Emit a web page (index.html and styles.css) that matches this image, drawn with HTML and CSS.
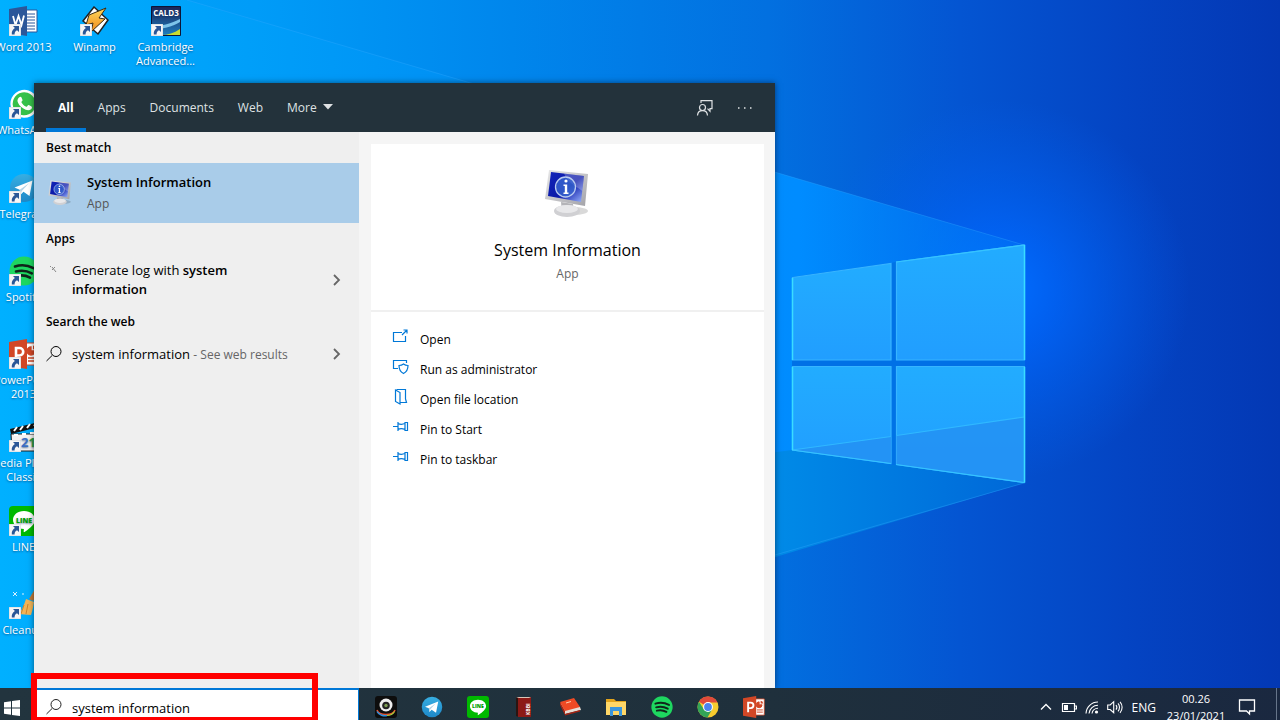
FILE: index.html
```html
<!DOCTYPE html>
<html lang="en">
<head>
    <meta charset="UTF-8">
    <meta name="viewport" content="width=device-width, initial-scale=1.0">
    <title>Search - System Information</title>
    <link rel="stylesheet" href="styles.css">
</head>
<body>
    <!-- Shared icons -->
    <svg class="sprite" aria-hidden="true">
        <defs>
            <linearGradient id="screenFill" x1="0" y1="0" x2="1" y2="1">
                <stop offset="0" stop-color="#1426b8"/>
                <stop offset=".55" stop-color="#0a18a8"/>
                <stop offset="1" stop-color="#9db8ff"/>
            </linearGradient>
            <linearGradient id="frameFill" x1="0" y1="0" x2="1" y2="1">
                <stop offset="0" stop-color="#e9e9e9"/>
                <stop offset="1" stop-color="#a2a2a8"/>
            </linearGradient>
            <linearGradient id="telegramFill" x1="0" y1="0" x2="0" y2="1">
                <stop offset="0" stop-color="#37aee2"/>
                <stop offset="1" stop-color="#1e88c8"/>
            </linearGradient>
            <linearGradient id="boltFill" x1="0" y1="0" x2="0" y2="1">
                <stop offset="0" stop-color="#ffd75a"/>
                <stop offset="1" stop-color="#f08a1c"/>
            </linearGradient>
            <linearGradient id="caldFill" x1="0" y1="0" x2="0" y2="1">
                <stop offset="0" stop-color="#1b2356"/>
                <stop offset="1" stop-color="#1d7fc0"/>
            </linearGradient>
        </defs>
        <symbol id="arrow" viewBox="0 0 12 12">
            <path d="M0 0h12v12H0z" fill="#f6f6f6" stroke="#b9c4cc" stroke-width=".6"/>
            <path d="M4 2h6v6L8 6.2C6.200 7.200 5.500 8.500 5.600 10.500H2.800C2.500 7.500 3.600 5.600 5.900 4.100z" fill="#2b5797"/>
        </symbol>
        <symbol id="search" viewBox="0 0 18 18">
            <circle cx="11" cy="6.500" r="5" fill="none" stroke="currentColor"/>
            <path d="M7.300 10.300L1.500 16" fill="none" stroke="currentColor"/>
        </symbol>
        <symbol id="chevron" viewBox="0 0 10 14">
            <path d="M2 2l5 5-5 5" fill="none" stroke="#666" stroke-width="1.800"/>
        </symbol>
        <symbol id="pin" viewBox="0 0 18 14">
            <path d="M1 6.500h5M6 2v9M6 3.500c2 1 4.500 1 7 0M6 9.500c2-1 4.500-1 7 0M13 2.500h2.500v8H13z" fill="none" stroke="currentColor" stroke-width="1.200"/>
        </symbol>
        <symbol id="monitor" viewBox="0 0 48 52">
            <ellipse cx="30" cy="43" rx="14" ry="4" fill="#000" opacity=".15"/>
            <path d="M17 34l12 2 1 8H18z" fill="#b4b4b8"/>
            <ellipse cx="23" cy="43" rx="13" ry="6" fill="#d0d0d3"/>
            <ellipse cx="23" cy="41" rx="11" ry="4" fill="#e8e8ea"/>
            <path d="M5 2l39 4-3 32L1 31z" fill="url(#frameFill)"/>
            <path d="M7 4l33 4-3 26-33-6z" fill="url(#screenFill)"/>
            <path d="M20 5.600L40 8l-1.700 15C30 17 24 15 20 5.600z" fill="#fff" opacity=".25"/>
            <circle cx="21.500" cy="19" r="10" fill="#3b6bd2" fill-opacity=".75" stroke="#b9cbf0" stroke-width="1.300"/>
            <circle cx="22" cy="13" r="1.600" fill="#fff"/>
            <path d="M19.500 16.500h3.700v8h1.300v1.500h-5v-1.500h1.300V18h-1.300z" fill="#fff"/>
        </symbol>
        <symbol id="whatsapp" viewBox="0 0 30 30">
            <path d="M1 29l2.200-7.300A14 14 0 1 1 8.500 27z" fill="#fff"/>
            <path d="M4 26l1.500-5A11.500 11.500 0 1 1 9 24.500z" fill="#36c14a"/>
            <path d="M10 8.500c1-1 2-1 2.500 0l1 2.500c.3 1-1.500 1.500-1 2.500 1.200 2 2.500 3.200 4.800 4.200 1 .4 1.500-2 2.500-1.600l2.700 1.300c.8.500.5 2-.5 2.900-2 1.700-5 1-8-1-3-2-5-4.500-5.500-7-.2-1.500.5-3 1.500-3.800z" fill="#fff"/>
        </symbol>
        <symbol id="telegram" viewBox="0 0 30 30">
            <circle cx="15" cy="15" r="14" fill="url(#telegramFill)"/>
            <path d="M5.500 14.500L23.500 7.500 20.500 23l-6-4.300-3 3-.8-5z" fill="#fff"/>
            <path d="M10.700 16.700L20 10.200l-7.200 7.700-1.300 3.800z" fill="#b5d3e6"/>
        </symbol>
        <symbol id="spotify" viewBox="0 0 30 30">
            <circle cx="15" cy="15" r="14.500" fill="#1ed760"/>
            <path d="M6 10.500c6-2 13-1.300 18.500 1.700M7 15.500c5.500-1.500 11-.8 15.800 1.800M8 20c4.500-1.200 9-.6 13 1.600" fill="none" stroke="#10251a" stroke-width="2.600" stroke-linecap="round"/>
        </symbol>
        <symbol id="powerpoint" viewBox="0 0 30 30">
            <path d="M16 4h13v22H16z" fill="#fff" stroke="#d24726"/>
            <path d="M22 8a4 4 0 1 0 4 4h-4zM19 19h8M19 22h8" fill="#d24726" stroke="#d24726" stroke-width="1.300"/>
            <path d="M24 6.500a4 4 0 0 1 3.500 3.700H24z" fill="#d24726"/>
            <path d="M0 3l18-3v30L0 27z" fill="#d24726"/>
            <path d="M7 22V9h3.500a3.500 3.500 0 0 1 0 7.500H7" fill="none" stroke="#fff" stroke-width="2.600"/>
        </symbol>
        <symbol id="line" viewBox="0 0 30 30">
            <rect width="30" height="30" rx="4" fill="#00b900"/>
            <path d="M15 5c6.500 0 11 4 11 8.800 0 4.200-4 8-10.500 12.200-.8.400-1 0-.8-1l.2-2C8.500 23 4 18.500 4 13.800 4 9 8.500 5 15 5z" fill="#fff"/>
            <text x="15" y="16.500" text-anchor="middle" font-family="Open Sans, sans-serif" font-weight="800" font-size="7" fill="#00a000">LINE</text>
        </symbol>
    </svg>

    <main class="desktop">
        <svg class="wallpaper" viewBox="0 0 1280 720" preserveAspectRatio="xMidYMid slice" aria-hidden="true">
            <defs>
                <linearGradient id="sky" x1="0" y1="0" x2="1" y2="0">
                    <stop offset="0" stop-color="#00a4fb"/>
                    <stop offset=".2" stop-color="#009cf8"/>
                    <stop offset=".4" stop-color="#0086ec"/>
                    <stop offset=".6" stop-color="#0270e0"/>
                    <stop offset=".75" stop-color="#0455d2"/>
                    <stop offset=".88" stop-color="#0444c3"/>
                    <stop offset="1" stop-color="#0338b4"/>
                </linearGradient>
                <radialGradient id="glow" gradientUnits="userSpaceOnUse" cx="1000" cy="290" r="190">
                    <stop offset="0" stop-color="#006eff"/>
                    <stop offset=".3" stop-color="#0068ff" stop-opacity=".7"/>
                    <stop offset="1" stop-color="#0060f0" stop-opacity="0"/>
                </radialGradient>
                <linearGradient id="beam" gradientUnits="userSpaceOnUse" x1="0" y1="0" x2="1024" y2="0">
                    <stop offset="0" stop-color="#00b0ff"/>
                    <stop offset=".2" stop-color="#00a2fa"/>
                    <stop offset=".45" stop-color="#0090f4"/>
                    <stop offset=".78" stop-color="#008cff"/>
                    <stop offset="1" stop-color="#0080f8" stop-opacity=".3"/>
                </linearGradient>
                <linearGradient id="lower" gradientUnits="userSpaceOnUse" x1="500" y1="0" x2="1024" y2="0">
                    <stop offset="0" stop-color="#0090e8" stop-opacity="0"/>
                    <stop offset=".5" stop-color="#008ce8"/>
                    <stop offset="1" stop-color="#0068d8"/>
                </linearGradient>
                <linearGradient id="pane" x1="0" y1="0" x2="0" y2="1">
                    <stop offset="0" stop-color="#22acff"/>
                    <stop offset="1" stop-color="#219eff"/>
                </linearGradient>
            </defs>
            <rect width="1280" height="720" fill="url(#sky)"/>
            <rect width="1280" height="720" fill="url(#glow)"/>
            <path d="M1024 245L187 0H0v720h210L1024 483z" fill="url(#beam)"/>
            <path d="M792 450L500 490v149L1024 483z" fill="url(#lower)"/>
            <path d="M187 0L1024 245M1024 483L775 555" fill="none" stroke="#35a8ff" stroke-opacity=".35"/>
            <path d="M792 277l99-14v202l-99-15zM896 262l129-17v238l-129-18z" fill="#0078ea"/>
            <path d="M891 263v202h5V262z" fill="#0073e6"/>
            <path d="M792 360h233v6H792z" fill="#0070e6"/>
            <g fill="url(#pane)" stroke="#37b4ff" stroke-width="1.200">
                <path d="M792.500 277.500l98.500-14V360h-98.500z"/>
                <path d="M896.500 262l128-17v115h-128z"/>
                <path d="M792.500 366.500H891V463.500l-98.500-13.500z"/>
                <path d="M896.500 366.500h128V482.500l-128-18z"/>
            </g>
            <path d="M792 450l99-13.500v27zM896.500 435.500l128-18.500v65.500l-128-18z" fill="#2490f2" opacity=".8"/>
            <path d="M792 450l99-13.500M896.500 435.500l128-18.500" fill="none" stroke="#30b8ff" stroke-width="1.200"/>
            <path d="M896 464.500l128 18M896 262l128-17M792 450l99 13.500" fill="none" stroke="#35c4ff" stroke-width="1.200"/>
            <path d="M792.500 278v82M792.500 367v83M1024.500 245v115M1024.500 367v115.500" fill="none" stroke="#3adcff" stroke-width="1.500"/>
        </svg>

        <nav class="shortcuts" aria-label="Desktop">
            <div class="shortcut-column">
                <a class="shortcut" href="#">
                    <svg class="shortcut-icon" viewBox="0 0 30 30">
                        <path d="M15 4h13v22H15z" fill="#fff" stroke="#2b579a"/>
                        <path d="M18 8h8M18 11h8M18 14h8M18 17h8M18 20h8M18 23h8" stroke="#2b579a"/>
                        <path d="M0 3l18-3v30L0 27z" fill="#2b579a"/>
                        <path d="M4 10l2.500 9 3-9 3 9L15 9.500" fill="none" stroke="#fff" stroke-width="1.800"/>
                        <use href="#arrow" y="18" width="12" height="12"/>
                    </svg>
                    <span>Word 2013</span>
                </a>
                <a class="shortcut" href="#">
                    <svg class="shortcut-icon" viewBox="0 0 30 30">
                        <use href="#whatsapp"/>
                        <use href="#arrow" y="18" width="12" height="12"/>
                    </svg>
                    <span>WhatsApp</span>
                </a>
                <a class="shortcut" href="#">
                    <svg class="shortcut-icon" viewBox="0 0 30 30">
                        <use href="#telegram"/>
                        <use href="#arrow" y="18" width="12" height="12"/>
                    </svg>
                    <span>Telegram</span>
                </a>
                <a class="shortcut" href="#">
                    <svg class="shortcut-icon" viewBox="0 0 30 30">
                        <use href="#spotify"/>
                        <use href="#arrow" y="18" width="12" height="12"/>
                    </svg>
                    <span>Spotify</span>
                </a>
                <a class="shortcut" href="#">
                    <svg class="shortcut-icon" viewBox="0 0 30 30">
                        <use href="#powerpoint"/>
                        <use href="#arrow" y="18" width="12" height="12"/>
                    </svg>
                    <span>PowerPoint 2013</span>
                </a>
                <a class="shortcut" href="#">
                    <svg class="shortcut-icon" viewBox="0 0 30 30">
                        <path d="M2 12h28v17H3z" fill="#f4f4f4" stroke="#222"/>
                        <path d="M1 7L30 0v5L2 12z" fill="#111"/>
                        <path d="M5 9l3-4M11 8l3-4M18 6l3-4M25 4l3-4M5 13h4M13 12h4M21 11h5" stroke="#fff" stroke-width="2"/>
                        <text x="12" y="25" font-family="Open Sans, sans-serif" font-weight="700" font-size="13" fill="#3b6fc4">2<tspan fill="#2f9a3c">1</tspan></text>
                        <use href="#arrow" y="18" width="12" height="12"/>
                    </svg>
                    <span>Media Player Classic</span>
                </a>
                <a class="shortcut" href="#">
                    <svg class="shortcut-icon" viewBox="0 0 30 30">
                        <use href="#line"/>
                        <use href="#arrow" y="18" width="12" height="12"/>
                    </svg>
                    <span>LINE</span>
                </a>
                <a class="shortcut" href="#">
                    <svg class="shortcut-icon" viewBox="0 0 30 30">
                        <path d="M20 10L26 0l4 2-6 10z" fill="#c07a3a"/>
                        <path d="M17 10l8 3c-1 6-2 10-3 13l-13-1c4-3 6-9 8-15z" fill="#f2b457"/>
                        <path d="M15 16l-3 9M19 15l-2 10" stroke="#c9852f"/>
                        <path d="M4 3l4 4M8 3L4 7M13 5h2" stroke="#d6f0ff"/>
                        <use href="#arrow" y="18" width="12" height="12"/>
                    </svg>
                    <span>Cleanup</span>
                </a>
            </div>
            <div class="shortcut-column">
                <a class="shortcut" href="#">
                    <svg class="shortcut-icon" viewBox="0 0 30 30">
                        <path d="M14 1l14 13-10 14L3 15z" fill="#fff" stroke="#222" stroke-width="1.500"/>
                        <path d="M26 2L9 9 6 19l7-2-2 9 14-13-6-1z" fill="url(#boltFill)" stroke="#3a2a10"/>
                        <use href="#arrow" y="18" width="12" height="12"/>
                    </svg>
                    <span>Winamp</span>
                </a>
            </div>
            <div class="shortcut-column">
                <a class="shortcut" href="#">
                    <svg class="shortcut-icon" viewBox="0 0 30 30">
                        <path d="M.5.5h29v29H.5z" fill="url(#caldFill)" stroke="#0c1538"/>
                        <path d="M1 21c9-1 18-3 28-8v3c-8 5-18 7-28 8z" fill="#7cc4ea"/>
                        <path d="M10 29c7 0 13-2 19-6v6z" fill="#c9dc2e"/>
                        <text x="15" y="10" text-anchor="middle" font-family="Open Sans, sans-serif" font-weight="700" font-size="8" fill="#fff">CALD3</text>
                        <use href="#arrow" y="18" width="12" height="12"/>
                    </svg>
                    <span>Cambridge Advanced...</span>
                </a>
            </div>
        </nav>

        <section class="search-panel" aria-label="Search results">
            <header class="panel-header">
                <div class="tabs">
                    <button class="tab active" type="button">All</button>
                    <button class="tab" type="button">Apps</button>
                    <button class="tab" type="button">Documents</button>
                    <button class="tab" type="button">Web</button>
                    <button class="tab" type="button">More
                        <svg class="caret" viewBox="0 0 10 6"><path d="M0 0h10L5 5.500z" fill="currentColor"/></svg>
                    </button>
                </div>
                <div class="header-actions">
                    <button class="icon-button" type="button" aria-label="Feedback">
                        <svg class="header-icon" viewBox="0 0 18 18">
                            <g fill="none" stroke="currentColor" stroke-width="1.200">
                                <circle cx="6.500" cy="8.500" r="3"/>
                                <path d="M1.500 16.500c.4-6.500 9.600-6.500 10 0M5 4V1.700h11v8h-2v2.500L11.500 9.700"/>
                            </g>
                        </svg>
                    </button>
                    <button class="icon-button" type="button" aria-label="Options">
                        <svg class="header-icon" viewBox="0 0 18 18">
                            <path d="M2 9h1.500M8 9h1.500M14 9h1.500" stroke="currentColor" stroke-width="1.500"/>
                        </svg>
                    </button>
                </div>
            </header>

            <div class="panel-body">
                <div class="results">
                    <h2 class="group-title">Best match</h2>
                    <button class="best-match" type="button">
                        <svg class="best-icon" viewBox="0 0 48 52"><use href="#monitor"/></svg>
                        <span class="best-text">
                            <strong>System Information</strong>
                            <small>App</small>
                        </span>
                    </button>
                    <h2 class="group-title">Apps</h2>
                    <button class="result two-line" type="button">
                        <svg class="result-icon" viewBox="0 0 18 18">
                            <path d="M5 4l1 1M7 5l4 5M10 5L7 8" stroke="#888"/>
                        </svg>
                        <span class="result-text">Generate log with <strong>system information</strong></span>
                        <svg class="result-chevron" viewBox="0 0 10 14"><use href="#chevron"/></svg>
                    </button>
                    <h2 class="group-title">Search the web</h2>
                    <button class="result" type="button">
                        <svg class="result-icon" viewBox="0 0 18 18"><use href="#search"/></svg>
                        <span class="result-text">system information <small>- See web results</small></span>
                        <svg class="result-chevron" viewBox="0 0 10 14"><use href="#chevron"/></svg>
                    </button>
                </div>

                <div class="preview">
                    <div class="preview-card">
                        <div class="preview-head">
                            <svg class="preview-icon" viewBox="0 0 48 52"><use href="#monitor"/></svg>
                            <h1 class="preview-title">System Information</h1>
                            <p class="preview-type">App</p>
                        </div>
                        <div class="actions">
                            <button class="action" type="button">
                                <svg class="action-icon" viewBox="0 0 18 18">
                                    <path d="M10 4.500H1.500v9h12V8M10 7l5-5M11.500 2H15v3.500" fill="none" stroke="currentColor" stroke-width="1.200"/>
                                </svg>
                                Open
                            </button>
                            <button class="action" type="button">
                                <svg class="action-icon" viewBox="0 0 18 18">
                                    <path d="M6 10.500H1.500V2.500h13V5M2 10.500h4M11.500 6c1.500 1.200 3 1.500 4.500 1.500 0 4-1.500 6.500-4.500 8-3-1.500-4.500-4-4.500-8 1.500 0 3-.3 4.500-1.500z" fill="none" stroke="currentColor" stroke-width="1.200"/>
                                </svg>
                                Run as administrator
                            </button>
                            <button class="action" type="button">
                                <svg class="action-icon" viewBox="0 0 18 18">
                                    <path d="M4.500 1.500h9V11l1 3.500H8V16L3.500 13.500V2L8 4.500V14.500" fill="none" stroke="currentColor" stroke-width="1.200"/>
                                </svg>
                                Open file location
                            </button>
                            <button class="action" type="button">
                                <svg class="action-icon" viewBox="0 0 18 14"><use href="#pin"/></svg>
                                Pin to Start
                            </button>
                            <button class="action" type="button">
                                <svg class="action-icon" viewBox="0 0 18 14"><use href="#pin"/></svg>
                                Pin to taskbar
                            </button>
                        </div>
                    </div>
                </div>
            </div>
        </section>
    </main>

    <footer class="taskbar">
        <button class="start" type="button" aria-label="Start">
            <svg class="start-icon" viewBox="0 0 16 16">
                <path d="M0 2.200l7-1v6.300H0zM8 1l8-1v7.500H8zM0 8.500h7v6.300l-7-1zM8 8.500h8V16l-8-1z" fill="#fff"/>
            </svg>
        </button>
        <div class="search-box">
            <label for="searchInput" aria-label="Search">
                <svg class="result-icon" viewBox="0 0 18 18"><use href="#search"/></svg>
            </label>
            <input type="text" id="searchInput" value="system information">
            <div class="highlight"></div>
        </div>
        <div class="task-apps">
            <button class="task" type="button" aria-label="Camera">
                <svg class="task-icon" viewBox="0 0 22 22">
                    <rect width="22" height="22" rx="3" fill="#0d0d0d"/>
                    <circle cx="11" cy="9" r="6.500" fill="#eee"/>
                    <circle cx="11" cy="9.500" r="3.800" fill="#222"/>
                    <circle cx="11" cy="9.500" r="1.700" fill="#7c9c52"/>
                    <path d="M2 14c2 6 16 6 18 0" fill="none" stroke="#e6512d" stroke-width="1.500"/>
                    <path d="M2 15.500c2 4 7 4.800 10 4" fill="none" stroke="#2a8fe0" stroke-width="1.500"/>
                    <path d="M12 19.500c4 0 6-1.500 7.500-4" fill="none" stroke="#a8ce3a" stroke-width="1.200"/>
                </svg>
            </button>
            <button class="task" type="button" aria-label="Telegram">
                <svg class="task-icon" viewBox="0 0 30 30"><use href="#telegram"/></svg>
            </button>
            <button class="task" type="button" aria-label="LINE">
                <svg class="task-icon" viewBox="0 0 30 30"><use href="#line"/></svg>
            </button>
            <button class="task" type="button" aria-label="KBBI">
                <svg class="task-icon" viewBox="0 0 22 22">
                    <path d="M3 1l3 1v19l-3-1z" fill="#2a1512"/>
                    <path d="M5 1h13v20H5z" fill="#8c1a16"/>
                    <path d="M3 1h13l2 1H6z" fill="#d9c6b8"/>
                    <text x="-19" y="16.500" transform="rotate(-90)" font-family="Open Sans, sans-serif" font-weight="700" font-size="5" fill="#fff">KBBI</text>
                </svg>
            </button>
            <button class="task" type="button" aria-label="Dictionary">
                <svg class="task-icon" viewBox="0 0 22 22">
                    <path d="M1 7l5 11 16-4-1-3z" fill="#e8ddd4"/>
                    <path d="M1 6L15 2l6 9-15 4z" fill="#f04a24"/>
                    <path d="M1 6l5 9v4L1 9zM6 18l15-4v1.500L6 19.500z" fill="#a82412"/>
                    <path d="M7 7l5-1.500" stroke="#ffd0b0"/>
                </svg>
            </button>
            <button class="task" type="button" aria-label="File Explorer">
                <svg class="task-icon" viewBox="0 0 22 22">
                    <path d="M1 3h8l2 2h10v4H1z" fill="#e2a41c"/>
                    <path d="M1 6h20v13H1z" fill="#ffd767"/>
                    <path d="M5 11h12v9h-3v-5H8v5H5z" fill="#3a96dd"/>
                </svg>
            </button>
            <button class="task" type="button" aria-label="Spotify">
                <svg class="task-icon" viewBox="0 0 30 30"><use href="#spotify"/></svg>
            </button>
            <button class="task" type="button" aria-label="Chrome">
                <svg class="task-icon" viewBox="0 0 22 22">
                    <circle cx="11" cy="11" r="10.500" fill="#f7cb2e"/>
                    <path d="M11 11L1.900 5.800A10.500 10.500 0 0 1 20.500 6.500H11z" fill="#e04a3a"/>
                    <path d="M1.900 5.800A10.500 10.500 0 0 0 10.500 21.500L15 13.500 7 13.500z" fill="#33a457"/>
                    <circle cx="11" cy="11" r="4.900" fill="#fff"/>
                    <circle cx="11" cy="11" r="3.900" fill="#4a83ee"/>
                </svg>
            </button>
            <button class="task" type="button" aria-label="PowerPoint">
                <svg class="task-icon" viewBox="0 0 30 30"><use href="#powerpoint"/></svg>
            </button>
        </div>
        <div class="tray">
            <button class="tray-button" type="button" aria-label="Show hidden icons">
                <svg class="tray-icon" viewBox="0 0 16 16"><path d="M3 10.500l5-5 5 5" fill="none" stroke="currentColor" stroke-width="1.300"/></svg>
            </button>
            <button class="tray-button" type="button" aria-label="Battery">
                <svg class="tray-icon" viewBox="0 0 16 16">
                    <path d="M1.500 4.500h12v8h-12zM14 7h1.500v3H14" fill="none" stroke="currentColor" stroke-width="1.200"/>
                    <path d="M3 6h4v5H3z" fill="currentColor"/>
                </svg>
            </button>
            <button class="tray-button" type="button" aria-label="Network">
                <svg class="tray-icon" viewBox="0 0 16 16">
                    <path d="M2 14.500A12 12 0 0 1 14 3M5 14.500A9 9 0 0 1 14 6.300M8 14.500A6 6 0 0 1 14 9.300" fill="none" stroke="currentColor" stroke-width="1.100"/>
                    <circle cx="12.500" cy="13" r="1.600" fill="currentColor"/>
                </svg>
            </button>
            <button class="tray-button" type="button" aria-label="Volume">
                <svg class="tray-icon" viewBox="0 0 16 16">
                    <path d="M.7 6h2.500l3.500-3.300v11L3.200 10.500H.7zM9 6c1 1.300 1 3.300 0 4.600M11 4.300c2 2.200 2 5.800 0 8M13 2.800c2.800 3 2.800 8 0 11" fill="none" stroke="currentColor" stroke-width="1.100"/>
                </svg>
            </button>
            <button class="language" type="button">ENG</button>
            <button class="clock" type="button">
                <span>00.26</span>
                <span>23/01/2021</span>
            </button>
            <button class="notifications" type="button" aria-label="Notifications">
                <svg class="notify-icon" viewBox="0 0 18 18"><path d="M1.500 2h15v11h-5v3l-3-3h-7z" fill="none" stroke="currentColor" stroke-width="1.300"/></svg>
            </button>
        </div>
    </footer>
</body>
</html>
```
FILE: styles.css
```css
* {
    box-sizing: border-box;
}

html, body {
    height: 100%;
    margin: 0;
    padding: 0;
}

body {
    display: flex;
    flex-direction: column;
    overflow: hidden;
    font-family: "Open Sans", "Noto Sans", sans-serif;
    font-size: 12px;
    color: #000;
    background: #0078d7;
}

button {
    margin: 0;
    padding: 0;
    border: 0;
    background: none;
    color: inherit;
    font: inherit;
    text-align: left;
}

h1, h2, p {
    margin: 0;
}

svg {
    display: block;
    flex: none;
}

.sprite {
    position: absolute;
    width: 0;
    height: 0;
}

/* Desktop */
.desktop {
    position: relative;
    flex: 1;
    min-height: 0;
}

.wallpaper {
    position: absolute;
    top: 0;
    left: 0;
    width: 100%;
    height: 100vh;
}

.shortcuts {
    position: relative;
    display: flex;
    height: 100%;
    margin-left: -12px;
    padding: 6px 0 16px;
}

.shortcut-column {
    display: grid;
    grid-template-rows: repeat(8, 1fr);
    width: 71px;
}

.shortcut {
    display: flex;
    flex-direction: column;
    align-items: center;
    gap: 4px;
    color: #fff;
    font-size: 11px;
    line-height: 14px;
    text-align: center;
    text-decoration: none;
    text-shadow: 0 1px 2px rgba(0, 40, 90, 0.6);
}

.shortcut-icon {
    width: 30px;
    height: 30px;
}

/* Search panel */
.search-panel {
    position: absolute;
    top: 83px;
    bottom: 0;
    left: 34px;
    display: flex;
    flex-direction: column;
    width: 741px;
    max-width: calc(100% - 34px);
    background: #f5f5f5;
    box-shadow: 0 0 6px rgba(0, 0, 0, 0.5);
}

.panel-header {
    display: flex;
    justify-content: space-between;
    height: 49px;
    padding: 0 18px 0 12px;
    background: #23323b;
    color: #dfe2e4;
}

.tabs, .header-actions {
    display: flex;
}

.tab {
    display: flex;
    align-items: center;
    gap: 6px;
    padding: 3px 12px 0;
    border-bottom: 4px solid transparent;
}

.tab.active {
    border-bottom-color: #0078d7;
    color: #fff;
    font-weight: 700;
}

.caret {
    width: 10px;
    height: 6px;
}

.header-actions {
    gap: 16px;
}

.icon-button {
    display: flex;
    align-items: center;
    justify-content: center;
    width: 24px;
}

.header-icon {
    width: 18px;
    height: 18px;
}

.panel-body {
    display: flex;
    flex: 1;
    min-height: 0;
}

.results {
    width: 325px;
    background: #efefef;
}

.group-title {
    padding: 0 12px;
    font-size: 12px;
    font-weight: 600;
    line-height: 31px;
}

.best-match {
    display: flex;
    align-items: center;
    gap: 14px;
    width: 100%;
    height: 60px;
    padding: 0 14px;
    background: #a9cce9;
}

.best-icon {
    width: 25px;
    height: 28px;
}

.best-text {
    display: flex;
    flex-direction: column;
    line-height: 22px;
}

.best-text strong {
    font-size: 13px;
    font-weight: 600;
}

.best-text small {
    color: #555;
    font-size: 12px;
}

.result {
    display: flex;
    align-items: center;
    gap: 9px;
    width: 100%;
    height: 34px;
    padding: 0 17px 0 11px;
    font-size: 13px;
    line-height: 19px;
}

.result strong {
    font-weight: 600;
}

.result small {
    color: #666;
    font-size: 12px;
}

.two-line {
    height: 52px;
}

.two-line .result-icon {
    align-self: flex-start;
    margin-top: 8px;
}

.result-icon {
    width: 18px;
    height: 18px;
}

.result-text {
    flex: 1;
}

.two-line .result-text {
    padding-right: 60px;
}

.result-chevron {
    width: 10px;
    height: 14px;
}

.preview {
    flex: 1;
    padding: 12px 11px 0 12px;
}

.preview-card {
    height: 100%;
    background: #fff;
}

.preview-head {
    display: flex;
    flex-direction: column;
    align-items: center;
    height: 168px;
    padding-top: 24px;
    border-bottom: 2px solid #f0f0f0;
}

.preview-icon {
    width: 48px;
    height: 52px;
}

.preview-title {
    margin-top: 17px;
    font-size: 16px;
    font-weight: 400;
    line-height: 26px;
}

.preview-type {
    color: #666;
    font-size: 12px;
    line-height: 22px;
}

.actions {
    padding: 12px 21px;
}

.action {
    display: flex;
    align-items: center;
    gap: 10px;
    width: 100%;
    height: 30px;
}

.action-icon {
    width: 18px;
    height: 18px;
    margin-bottom: 4px;
    color: #0078d7;
}

/* Taskbar */
.taskbar {
    position: relative;
    display: flex;
    height: 32px;
    background: linear-gradient(90deg, #22343e, #1f303c 60%, #1a2840);
    color: #fff;
}

.start {
    display: flex;
    justify-content: center;
    width: 34px;
    padding: 12px 11px 0 0;
}

.start-icon {
    width: 16px;
    height: 16px;
}

.search-box {
    position: relative;
    display: flex;
    gap: 9px;
    width: 325px;
    padding: 8px 11px 0;
    border-top: 2px solid #0078d7;
    border-right: 1px solid #0078d7;
    background: #fff;
    color: #222;
}

.search-box input {
    flex: 1;
    min-width: 0;
    height: 19px;
    padding: 0;
    border: 0;
    outline: 0;
    background: none;
    color: #000;
    font: inherit;
    font-size: 13px;
}

/* Red frame around the typed query */
.highlight {
    position: absolute;
    top: -17px;
    right: 40px;
    bottom: -3px;
    left: -3px;
    border: 6px solid #f00;
    pointer-events: none;
}

.task-apps {
    display: flex;
    padding-left: 4px;
}

.task {
    display: flex;
    justify-content: center;
    width: 46px;
    padding-top: 8px;
}

.task-icon {
    width: 22px;
    height: 22px;
}

.tray {
    display: flex;
    align-items: center;
    height: 38px;
    margin-left: auto;
    padding-right: 3px;
}

.tray::after {
    content: "";
    width: 1px;
    height: 38px;
    margin-left: 18px;
    background: #66758a;
}

.tray-button {
    display: flex;
    justify-content: center;
    width: 23px;
}

.tray-icon {
    width: 16px;
    height: 16px;
}

.language {
    padding-left: 5px;
}

.clock {
    display: flex;
    flex-direction: column;
    width: 80px;
    font-size: 11px;
    line-height: 17px;
    text-align: center;
}

.notifications {
    display: flex;
    justify-content: center;
    width: 22px;
}

.notify-icon {
    width: 18px;
    height: 18px;
}
```
